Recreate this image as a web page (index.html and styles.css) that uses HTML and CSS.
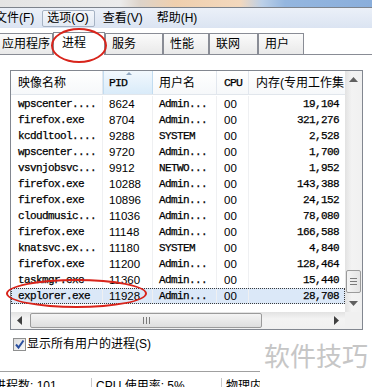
FILE: index.html
```html
<!DOCTYPE html>
<html>
<head>
<meta charset="utf-8">
<title>任务管理器</title>
<link rel="stylesheet" href="styles.css">
</head>
<body>
<div class="win">
  <div class="titlebar"></div>
  <div class="menubar">
    <span class="mi mi-first">文件(F)</span>
    <span class="mi mi-active">选项(O)</span>
    <span class="mi">查看(V)</span>
    <span class="mi">帮助(H)</span>
  </div>
  <div class="tabs">
    <div class="tab t1">应用程序</div>
    <div class="tab t2 sel">进程</div>
    <div class="tab t3">服务</div>
    <div class="tab t4">性能</div>
    <div class="tab t5">联网</div>
    <div class="tab t6">用户</div>
  </div>
  <div class="page">
    <div class="lv">
      <div class="lv-main">
        <div class="lv-head cols">
          <div class="hc c-name">映像名称</div>
          <div class="hc c-pid sorted mono">PID<span class="sort"></span></div>
          <div class="hc c-user">用户名</div>
          <div class="hc c-cpu mono">CPU</div>
          <div class="hc c-mem">内存(专用工作集</div>
        </div>
        <div class="lv-body">
          <div class="row cols"><span class="c c-name mono">wpscenter....</span><span class="c c-pid num">8624</span><span class="c c-user mono">Admin...</span><span class="c c-cpu num">00</span><span class="c c-mem mono">19,104</span></div>
          <div class="row cols"><span class="c c-name mono">firefox.exe</span><span class="c c-pid num">8704</span><span class="c c-user mono">Admin...</span><span class="c c-cpu num">00</span><span class="c c-mem mono">321,276</span></div>
          <div class="row cols"><span class="c c-name mono">kcddltool....</span><span class="c c-pid num">9288</span><span class="c c-user mono">SYSTEM</span><span class="c c-cpu num">00</span><span class="c c-mem mono">2,528</span></div>
          <div class="row cols"><span class="c c-name mono">wpscenter....</span><span class="c c-pid num">9720</span><span class="c c-user mono">Admin...</span><span class="c c-cpu num">00</span><span class="c c-mem mono">1,700</span></div>
          <div class="row cols"><span class="c c-name mono">vsvnjobsvc...</span><span class="c c-pid num">9912</span><span class="c c-user mono">NETWO...</span><span class="c c-cpu num">00</span><span class="c c-mem mono">1,952</span></div>
          <div class="row cols"><span class="c c-name mono">firefox.exe</span><span class="c c-pid num">10288</span><span class="c c-user mono">Admin...</span><span class="c c-cpu num">00</span><span class="c c-mem mono">143,388</span></div>
          <div class="row cols"><span class="c c-name mono">firefox.exe</span><span class="c c-pid num">10896</span><span class="c c-user mono">Admin...</span><span class="c c-cpu num">00</span><span class="c c-mem mono">24,152</span></div>
          <div class="row cols"><span class="c c-name mono">cloudmusic...</span><span class="c c-pid num">11036</span><span class="c c-user mono">Admin...</span><span class="c c-cpu num">00</span><span class="c c-mem mono">78,080</span></div>
          <div class="row cols"><span class="c c-name mono">firefox.exe</span><span class="c c-pid num">11148</span><span class="c c-user mono">Admin...</span><span class="c c-cpu num">00</span><span class="c c-mem mono">166,588</span></div>
          <div class="row cols"><span class="c c-name mono">knatsvc.ex...</span><span class="c c-pid num">11180</span><span class="c c-user mono">SYSTEM</span><span class="c c-cpu num">00</span><span class="c c-mem mono">4,840</span></div>
          <div class="row cols"><span class="c c-name mono">firefox.exe</span><span class="c c-pid num">11200</span><span class="c c-user mono">Admin...</span><span class="c c-cpu num">00</span><span class="c c-mem mono">128,464</span></div>
          <div class="row cols"><span class="c c-name mono">taskmgr.exe</span><span class="c c-pid num">11360</span><span class="c c-user mono">Admin...</span><span class="c c-cpu num">00</span><span class="c c-mem mono">15,440</span></div>
          <div class="row cols selrow"><span class="c c-name mono">explorer.exe</span><span class="c c-pid num">11928</span><span class="c c-user mono">Admin...</span><span class="c c-cpu num">00</span><span class="c c-mem mono">28,708</span></div>
        </div>
      </div>
      <div class="vscroll">
        <div class="sbtn"><svg width="9" height="5" viewBox="0 0 9 5"><polygon points="0,5 4.5,0 9,5" fill="#606060"/></svg></div>
        <div class="sfill"></div>
        <div class="vthumb"><svg width="7" height="7" viewBox="0 0 7 7"><path d="M0 0.5H7M0 3.5H7M0 6.5H7" stroke="#7a7a7a" stroke-width="1"/></svg></div>
        <div class="vgap"></div>
        <div class="sbtn"><svg width="9" height="5" viewBox="0 0 9 5"><polygon points="0,0 4.5,5 9,0" fill="#606060"/></svg></div>
      </div>
      <div class="hscroll">
        <div class="sbtn"><svg width="5" height="9" viewBox="0 0 5 9"><polygon points="5,0 0,4.5 5,9" fill="#404040"/></svg></div>
        <div class="hthumb"><svg width="7" height="7" viewBox="0 0 7 7"><path d="M0.5 0V7M3.5 0V7M6.5 0V7" stroke="#7a7a7a" stroke-width="1"/></svg></div>
        <div class="sfill"></div>
        <div class="sbtn"><svg width="5" height="9" viewBox="0 0 5 9"><polygon points="0,0 5,4.5 0,9" fill="#404040"/></svg></div>
      </div>
      <div class="corner"></div>
    </div>
    <div class="chk">
      <span class="box"><svg width="11" height="11" viewBox="0 0 11 11"><path d="M2 5.5 L4.5 8.5 L9.5 1.5" fill="none" stroke="#2a4f9f" stroke-width="2"/></svg></span>
      <span class="chk-label">显示所有用户的进程(S)</span>
    </div>
  </div>
  <div class="status">
    <div class="sp sp1">进程数: 101</div>
    <div class="sp sp2">CPU 使用率: 5%</div>
    <div class="sp sp3">物理内存: 50%</div>
  </div>
</div>
<div class="ell ell-tab"></div>
<div class="ell ell-row"></div>
<div class="wm">软件技巧</div>
</body>
</html>
```
FILE: styles.css
```css
* { box-sizing: border-box; margin: 0; padding: 0; }
html, body { width: 372px; height: 387px; overflow: hidden; background: #fff; }
body {
  position: relative;
  font: 12px/16px "Liberation Sans", "Noto Sans CJK SC", sans-serif;
  color: #000;
}
.win { width: 372px; height: 387px; overflow: hidden; }

.titlebar {
  height: 8px;
  background: linear-gradient(to right, #e4e4e4 0, #ececec 120px, #ddd3c9 140px, #efcfae 175px, #f3d8bd 240px, #bcd0e8 262px, #94b6df 285px, #8aaedb 100%);
  border-bottom: 1px solid #7d838c;
}

.menubar {
  height: 20px;
  display: flex;
  align-items: center;
  background: linear-gradient(#ebf0f8, #dbe4f2);
}
.mi {
  height: 17px;
  line-height: 15px;
  padding: 0 5px 0 4px;
  border: 1px solid transparent;
  margin-right: 3px;
  white-space: nowrap;
}
.mi-first { margin-left: -10px; margin-right: 2px; }
.mi-active {
  border-color: #a6b3c4;
  border-radius: 2px;
  background: linear-gradient(#f4f7fb, #e3eaf4);
}

.tabs {
  height: 27px;
  display: flex;
  align-items: flex-end;
  border-bottom: 1px solid #898c95;
  background: #fff;
}
.tab {
  height: 21px;
  line-height: 20px;
  padding-left: 6px;
  border: 1px solid #898c95;
  border-bottom: none;
  background: linear-gradient(#fbfbfb, #e9e9e9);
  white-space: nowrap;
  flex: none;
}
.t1 { width: 59px; margin-left: -6px; padding-left: 7px; }
.t2 { width: 52px; }
.t3 { width: 58px; }
.t4 { width: 46px; }
.t5 { width: 49px; }
.t6 { width: 46px; }
.tab.sel {
  height: 23px;
  line-height: 21px;
  margin-bottom: -1px;
  background: #fff;
  padding-left: 8px;
  position: relative;
  z-index: 1;
}

.page { height: 316px; padding: 15px 0 0 10px; }

.lv {
  width: 353px;
  height: 260px;
  border: 1px solid #828790;
  display: grid;
  grid-template-columns: 334px 17px;
  grid-template-rows: 241px 17px;
  background: #fff;
}
.lv-main { overflow: hidden; }
.cols {
  display: grid;
  grid-template-columns: 92px 50px 64px 32px 96px;
}
.lv-head {
  height: 24px;
  border-bottom: 1px solid #e1e6ec;
  background: linear-gradient(#ffffff, #f6f8fa);
  margin-bottom: 1px;
}
.hc {
  line-height: 24px;
  border-right: 1px solid #e2e7ee;
  white-space: nowrap;
  overflow: hidden;
  position: relative;
}
.hc.c-name { padding-left: 7px; }
.hc.c-pid { padding-left: 6px; }
.hc.c-user { padding-left: 6px; }
.hc.c-cpu { padding-left: 7px; }
.hc.c-mem { padding-left: 7px; border-right: none; }
.hc.sorted {
  background: linear-gradient(#f2f8fd, #d9ebf9);
  border-left: 1px solid #c2dcf0;
  border-right: 1px solid #c2dcf0;
  padding-left: 5px;
}
.sort {
  position: absolute;
  left: 22px;
  top: 1px;
  width: 0;
  height: 0;
  border-left: 3px solid transparent;
  border-right: 3px solid transparent;
  border-bottom: 3px solid #8ea6c0;
}

.mono {
  font-family: "Liberation Mono", "Noto Sans CJK SC", monospace;
  font-size: 11px;
  letter-spacing: -0.6px;
  -webkit-text-stroke: 0.25px #000;
}
.hc.mono { font-size: 11.5px; letter-spacing: -0.9px; }
.num {
  font-family: "Liberation Sans", sans-serif;
  font-size: 11.5px;
}

.row { height: 16px; line-height: 16px; }
.c {
  display: block;
  white-space: nowrap;
  overflow: hidden;
  border-right: 1px solid #eff0f2;
}
.c.c-name { padding-left: 7px; }
.c.c-pid { padding-left: 6px; }
.c.c-user { padding-left: 6px; }
.c.c-cpu { padding-left: 7px; }
.c.c-mem { padding-right: 6px; text-align: right; border-right: none; }
.selrow {
  background: #dbe8f8;
  outline: 1px dotted #3a3a3a;
  outline-offset: -1px;
}

.vscroll {
  grid-row: 1;
  grid-column: 2;
  display: flex;
  flex-direction: column;
  background: linear-gradient(to right, #e2e2e2, #f3f3f3 40%, #f0f0f0);
}
.sbtn {
  flex: none;
  width: 17px;
  height: 17px;
  display: flex;
  align-items: center;
  justify-content: center;
}
.sfill { flex: 1; }
.vthumb {
  flex: none;
  height: 23px;
  margin: 0 1px;
  border: 1px solid #9b9b9b;
  border-radius: 2px;
  background: linear-gradient(to right, #f4f4f4, #e4e4e4);
  display: flex;
  align-items: center;
  justify-content: center;
}
.vgap { flex: none; height: 2px; }

.hscroll {
  grid-row: 2;
  grid-column: 1;
  display: flex;
  background: linear-gradient(#e2e2e2, #f3f3f3 40%, #f0f0f0);
}
.hthumb {
  flex: none;
  width: 232px;
  margin: 1px 0 1px 2px;
  border: 1px solid #9b9b9b;
  border-radius: 2px;
  background: linear-gradient(#f4f4f4, #dedede);
  display: flex;
  align-items: center;
  justify-content: center;
}
.corner { grid-row: 2; grid-column: 2; background: #f0f0f0; }

.chk {
  margin: 6px 0 0 3px;
  display: flex;
  align-items: center;
  height: 16px;
}
.box {
  width: 13px;
  height: 13px;
  border: 1px solid #8e8f8f;
  background: linear-gradient(135deg, #dcdcdc, #fafafa);
  display: flex;
  align-items: center;
  justify-content: center;
  margin-right: 1px;
}
.chk-label { white-space: nowrap; }

.status {
  width: 260px;
  height: 16px;
  border-top: 1px solid #a0a0a0;
  display: flex;
  padding-top: 6px;
}
.sp {
  height: 18px;
  line-height: 16px;
  white-space: nowrap;
  border-right: 1px solid #c8c8c8;
  padding-left: 4px;
  flex: none;
}
.sp1 { width: 102px; margin-left: -10px; }
.sp2 { width: 130px; }
.sp3 { border-right: none; }

.ell {
  position: absolute;
  border: 2.5px solid #d8241b;
  border-radius: 50%;
  z-index: 5;
}
.ell-tab { left: 51px; top: 28px; width: 56px; height: 35px; }
.ell-row { left: 6px; top: 279px; width: 141px; height: 29px; }

.wm {
  position: absolute;
  left: 260px;
  top: 338px;
  width: 112px;
  height: 49px;
  background: #fff;
  color: #c6c6c6;
  font-family: "Noto Sans CJK SC", sans-serif;
  font-size: 26px;
  line-height: 34px;
  padding-left: 4px;
  z-index: 4;
}
```
